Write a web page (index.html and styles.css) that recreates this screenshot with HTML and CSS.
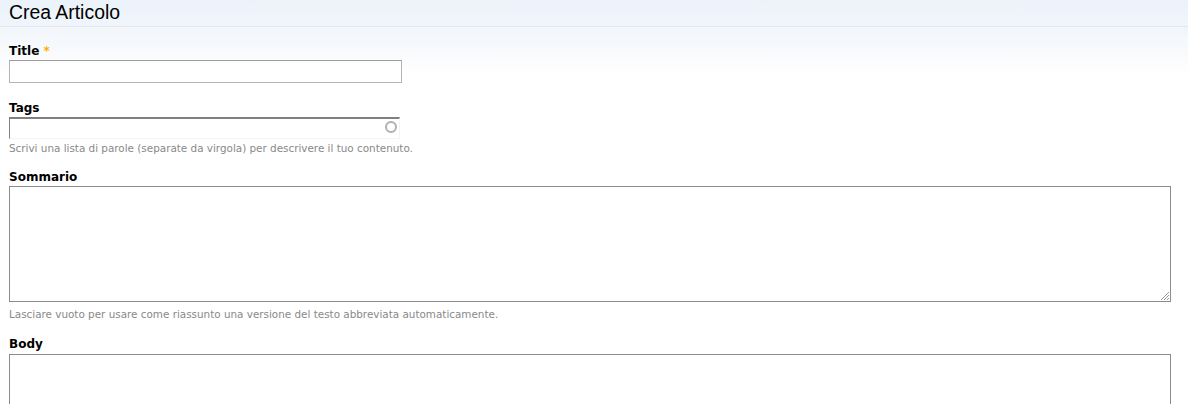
FILE: index.html
```html
<!DOCTYPE html>
<html lang="it">
<head>
<meta charset="utf-8">
<title>Crea Articolo</title>
<link rel="stylesheet" href="styles.css">
</head>
<body>
<div class="page">
  <h2 class="page-title">Crea Articolo</h2>
  <form class="node-form">
    <div class="form-item item-title">
      <label class="form-label" for="edit-title">Title <span class="required">*</span></label>
      <input class="form-text text-title" id="edit-title" type="text">
    </div>
    <div class="form-item item-tags">
      <label class="form-label" for="edit-tags">Tags</label>
      <div class="autocomplete">
        <input class="form-text text-tags" id="edit-tags" type="text">
        <span class="throbber"></span>
      </div>
      <div class="description">Scrivi una lista di parole (separate da virgola) per descrivere il tuo contenuto.</div>
    </div>
    <div class="form-item item-summary">
      <label class="form-label" for="edit-summary">Sommario</label>
      <div class="resizable">
        <textarea class="form-textarea area-summary" id="edit-summary"></textarea>
        <svg class="grippie" width="11" height="11" viewBox="0 0 11 11">
          <path d="M10 2 L2 10 M10 5 L5 10 M10 8 L8 10" stroke="#999" stroke-width="1" fill="none"/>
        </svg>
      </div>
      <div class="description desc-summary">Lasciare vuoto per usare come riassunto una versione del testo abbreviata automaticamente.</div>
    </div>
    <div class="form-item item-body">
      <label class="form-label" for="edit-body">Body</label>
      <textarea class="form-textarea area-body" id="edit-body"></textarea>
    </div>
  </form>
</div>
</body>
</html>
```

FILE: styles.css
```css
html, body {
  margin: 0;
  padding: 0;
}

body {
  background: #ffffff;
  font-family: "DejaVu Sans", Verdana, sans-serif;
  color: #000;
  overflow: hidden;
  height: 404px;
}

.page {
  background: linear-gradient(to bottom, #ebf2fa 0px, #f2f6fb 30px, #ffffff 76px);
  padding: 0 0 0 9px;
  height: 404px;
  overflow: hidden;
}

.page-title {
  margin: 0 0 0 -9px;
  padding: 0 0 0 9px;
  height: 26px;
  border-bottom: 1px solid #e2e8ee;
  font-family: "Liberation Sans", Arial, sans-serif;
  font-weight: normal;
  font-size: 19.4px;
  line-height: 25px;
  color: #000;
}

.node-form {
  display: flex;
  flex-direction: column;
}

.form-item {
  display: flex;
  flex-direction: column;
  align-items: flex-start;
}

.form-label {
  display: block;
  font-weight: bold;
  font-size: 12px;
  line-height: 16px;
  color: #000;
}

.required {
  color: #ffae00;
  font-weight: bold;
}

.item-title { margin-top: 16px; }
.item-title .form-label { margin-bottom: 1px; }

.form-text {
  box-sizing: border-box;
  margin: 0;
  padding: 2px 4px;
  font-family: "DejaVu Sans", Verdana, sans-serif;
  font-size: 12px;
  background: #fff;
  outline: none;
}

.text-title {
  width: 393px;
  height: 23px;
  border: 1px solid #b4b4b4;
  border-top-color: #9c9c9c;
}

.item-tags { margin-top: 17px; }
.item-tags .form-label { margin-bottom: 1px; }

.autocomplete {
  position: relative;
  width: 391px;
  height: 22px;
}

.text-tags {
  width: 391px;
  height: 22px;
  border: 0;
  border-top: 2px solid #808080;
  border-left: 1px solid #808080;
  border-right: 1px solid #f4f4f4;
  border-bottom: 1px solid #f4f4f4;
}

.throbber {
  position: absolute;
  right: 3px;
  top: 4px;
  box-sizing: border-box;
  width: 12px;
  height: 12px;
  border: 2px solid #b0b0b0;
  border-radius: 50%;
}

.description {
  font-size: 10.4px;
  line-height: 14px;
  color: #898989;
  margin-top: 2px;
}

.item-summary { margin-top: 14px; }
.item-summary .form-label { margin-bottom: 1px; }

.resizable {
  position: relative;
  display: flex;
}

.form-textarea {
  box-sizing: border-box;
  margin: 0;
  width: 1162px;
  border: 1px solid #8c8c8c;
  background: #fff;
  resize: none;
  outline: none;
  font-family: "DejaVu Sans", Verdana, sans-serif;
  font-size: 12px;
  display: block;
}

.area-summary { height: 116px; }

.grippie {
  position: absolute;
  right: 1px;
  bottom: 1px;
}

.desc-summary { margin-top: 5px; }

.item-body { margin-top: 15px; }
.item-body .form-label { margin-bottom: 2px; }

.area-body { height: 120px; }
```
